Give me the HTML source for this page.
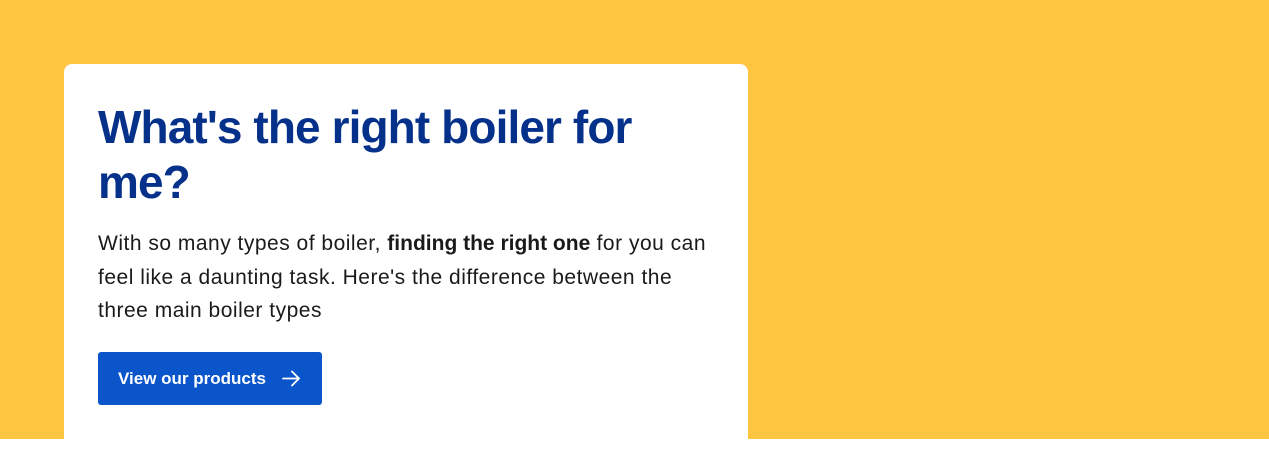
<!DOCTYPE html>
<html><head><meta charset="utf-8"><style>
html,body{margin:0;padding:0;width:1269px;height:457px;background:#fff;overflow:hidden;font-family:"Liberation Sans",sans-serif}
.band{position:absolute;left:0;top:0;width:1269px;height:439px;background:#FEC541}
.card{position:absolute;left:64px;top:64px;width:684px;height:375px;background:#fff;border-radius:8px 8px 0 0}
h1{position:absolute;left:34px;top:36px;margin:0;width:620px;font-size:46px;line-height:55px;font-weight:700;color:#06318A;letter-spacing:-0.9px}
p{position:absolute;left:34px;top:163px;margin:0;width:622px;font-size:21px;line-height:33.5px;color:#1a1a1a;letter-spacing:0.5px}
p b{font-weight:700;letter-spacing:0}
.btn{position:absolute;left:34px;top:288px;width:224px;height:53px;background:#0B55CA;border-radius:3px;color:#fff;font-weight:700;font-size:17px;letter-spacing:0}
.btn span{position:absolute;left:20px;top:17px;line-height:20px}
.btn svg{position:absolute;left:184px;top:17px}
</style></head><body>
<div class="band"></div>
<div class="card">
<h1>What's the right boiler for me?</h1>
<p>With so many types of boiler, <b>finding the right one</b> for you can feel like a daunting task. Here's the difference between the three main boiler types</p>
<div class="btn"><span>View our products</span><svg width="19" height="19" viewBox="0 0 19 19"><path d="M1 9.5H17M10 2.5L17 9.5L10 16.5" fill="none" stroke="#fff" stroke-width="1.8" stroke-linecap="round" stroke-linejoin="round"/></svg></div>
</div>
</body></html>
